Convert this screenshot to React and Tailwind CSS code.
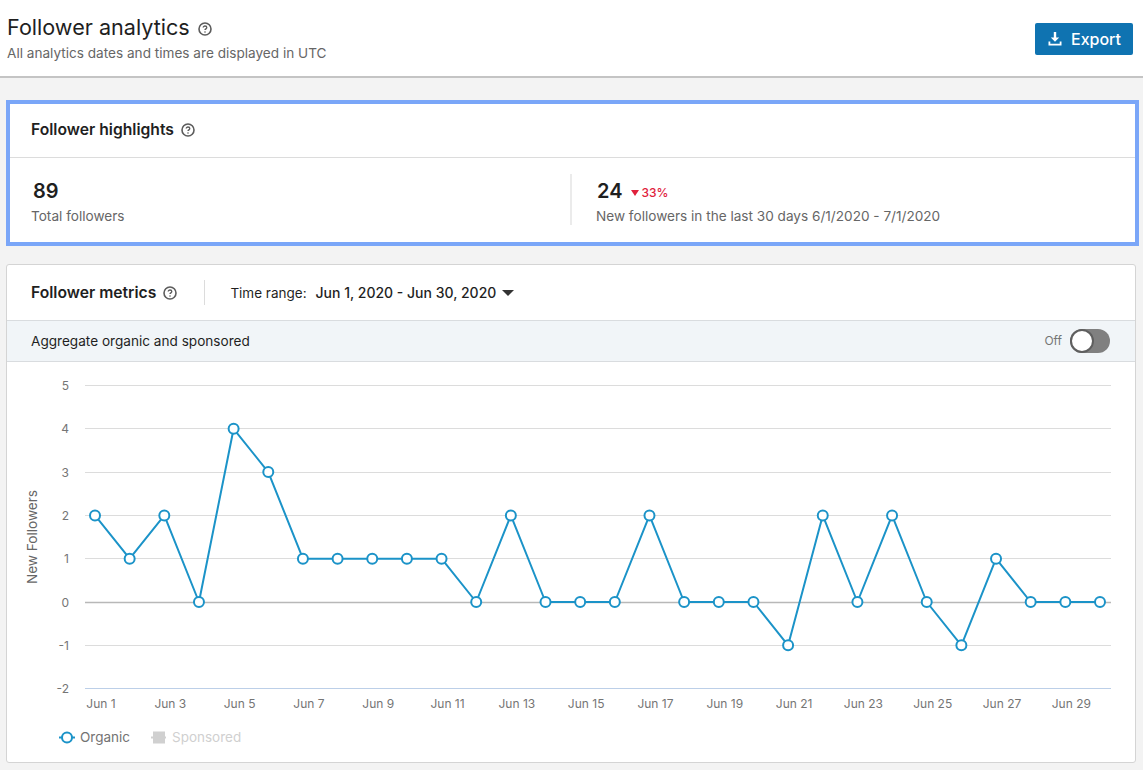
import React from 'react';

const values = [2, 1, 2, 0, 4, 3, 1, 1, 1, 1, 1, 0, 2, 0, 0, 0, 2, 0, 0, 0, -1, 2, 0, 2, 0, -1, 1, 0, 0, 0];
const ticks = [5, 4, 3, 2, 1, 0, -1, -2];
const xOf = (i) => 95 + i * 34.655;
const yOf = (v) => 602 - v * 43.3;

function Chart() {
  const points = values.map((v, i) => `${xOf(i)},${yOf(v)}`).join(' ');
  return (
    <svg width="1128" height="400" viewBox="7 362 1128 400" className="block">
      {ticks.map((t) => (
        <g key={t}>
          <line x1="85" x2="1111" y1={Math.floor(yOf(t)) + 0.5} y2={Math.floor(yOf(t)) + 0.5} stroke={t === 0 ? '#b8b8b8' : t === -2 ? '#bccfe8' : '#dcdcdc'} strokeWidth={t === 0 ? 1.5 : 1} />
          <text x="69" y={yOf(t) + 4.5} textAnchor="end" fontSize="12" fill="#757575">{t}</text>
        </g>
      ))}
      <text transform="translate(37 537) rotate(-90)" textAnchor="middle" fontSize="13.6" fill="#666666">New Followers</text>
      <polyline points={points} fill="none" stroke="#1b93c8" strokeWidth="2" strokeLinejoin="round" />
      {values.map((v, i) => (
        <circle key={i} cx={xOf(i)} cy={yOf(v)} r="5" fill="#ffffff" stroke="#1b93c8" strokeWidth="2" />
      ))}
      {values.map((v, i) =>
        i % 2 === 0 ? (
          <text key={i} x={xOf(i) + 6} y="708" textAnchor="middle" fontSize="12" fill="#757575">{`Jun ${i + 1}`}</text>
        ) : null
      )}
      <line x1="59" x2="75" y1="737.5" y2="737.5" stroke="#1b93c8" strokeWidth="2" />
      <circle cx="67" cy="737.5" r="5" fill="#ffffff" stroke="#1b93c8" strokeWidth="2" />
      <text x="80" y="742" fontSize="13.5" fill="#737373">Organic</text>
      <line x1="151" x2="166" y1="737.5" y2="737.5" stroke="#d0d0d0" strokeWidth="2" />
      <rect x="153" y="731.5" width="12" height="12" fill="#d0d0d0" />
      <text x="172" y="742" fontSize="13.5" fill="#d0d0d0">Sponsored</text>
    </svg>
  );
}

function Help({ className = '' }) {
  return (
    <svg width="14" height="14" viewBox="0 0 14 14" fill="none" stroke="#5c5c5c" className={className}>
      <circle cx="7" cy="7" r="6" strokeWidth="1.6" />
      <path d="M5.2 5.6C5.2 4.6 6 4 7 4s1.8.6 1.8 1.5c0 1.3-1.8 1.4-1.8 2.6" strokeWidth="1.3" />
      <circle cx="7" cy="10" r=".8" fill="#5c5c5c" stroke="none" />
    </svg>
  );
}

export default function App() {
  return (
    <div className="h-[770px] overflow-hidden bg-[#f3f3f3] font-['Inter',sans-serif] text-[#1f1f1f]">
      <header className="flex h-[78px] items-start justify-between border-b-2 border-[#c4c4c4] bg-white pl-[7px] pr-[10px]">
        <div className="pt-[12px]">
          <div className="flex items-center gap-[8px]">
            <h1 className="text-[21.6px] leading-[30px]">Follower analytics</h1>
            <Help className="mt-[3px]" />
          </div>
          <p className="mt-[1px] text-[13.6px] leading-[20px] text-[#666666]">All analytics dates and times are displayed in UTC</p>
        </div>
        <button className="mt-[23px] flex h-[32px] w-[98px] items-center justify-center gap-[8px] rounded-[2px] bg-[#0f73b1] text-[16px] font-medium text-white">
          <svg width="16" height="16" viewBox="0 0 16 16" fill="currentColor">
            <path d="M6.8 1h2.4v5.4h3L8 10.8 3.8 6.4h3z" />
            <path d="M1.5 10.5H3.3v2.2h9.4v-2.2h1.8v4h-13z" />
          </svg>
          Export
        </button>
      </header>

      <section className="ml-[6px] mt-[22px] h-[146px] w-[1133px] border-4 border-[#7aa6f8] bg-white">
        <div className="flex h-[54px] items-center gap-[7px] border-b border-[#dcdcdc] pb-[2px] pl-[21px]">
          <h2 className="text-[15.7px] font-semibold">Follower highlights</h2>
          <Help />
        </div>
        <div className="flex pt-[16px]">
          <div className="w-[560px] pl-[21px] pt-[3px]">
            <div className="pl-[2px] text-[20px] font-semibold leading-[28px]">89</div>
            <div className="mt-[1px] text-[13.6px] leading-[20px] text-[#666666]">Total followers</div>
          </div>
          <div className="h-[51px] border-l-2 border-[#ebebeb] pl-[24px] pt-[3px]">
            <div className="flex items-center gap-[9px] pl-[1px]">
              <span className="text-[20px] font-semibold leading-[28px]">24</span>
              <span className="mt-[3px] flex items-center gap-[2px] text-[12px] font-medium text-[#e0213c]">
                <svg width="8" height="6" viewBox="0 0 8 6" fill="currentColor"><path d="M0 0h8L4 6z" /></svg>
                33%
              </span>
            </div>
            <div className="mt-[1px] text-[13.6px] leading-[20px] text-[#666666]">New followers in the last 30 days 6/1/2020 - 7/1/2020</div>
          </div>
        </div>
      </section>

      <section className="ml-[6px] mt-[18px] w-[1130px] rounded-[3px] border border-[#d4d4d4] bg-white">
        <div className="flex h-[55px] items-center pl-[24px]">
          <h2 className="text-[15.7px] font-semibold">Follower metrics</h2>
          <Help className="ml-[7px]" />
          <div className="ml-[27px] h-[25px] w-px bg-[#dcdcdc]" />
          <span className="ml-[25px] mt-[1px] text-[13.5px]">Time range:</span>
          <span className="ml-[9px] text-[14px] font-medium">Jun 1, 2020 - Jun 30, 2020</span>
          <svg width="12" height="6" viewBox="0 0 12 6" className="ml-[6px]" fill="#333333"><path d="M0 0h12L6 6z" /></svg>
        </div>
        <div className="flex h-[42px] items-center justify-between border-y border-[#d9dcdf] bg-[#f1f5f8] pl-[24px] pr-[25px]">
          <span className="text-[13.6px]">Aggregate organic and sponsored</span>
          <div className="flex items-center gap-[8px]">
            <span className="text-[12px] text-[#757575]">Off</span>
            <div className="h-[24px] w-[40px] rounded-full bg-[#808080]">
              <div className="h-[24px] w-[24px] rounded-full border-2 border-[#5f5f5f] bg-white" />
            </div>
          </div>
        </div>
        <Chart />
      </section>
    </div>
  );
}
